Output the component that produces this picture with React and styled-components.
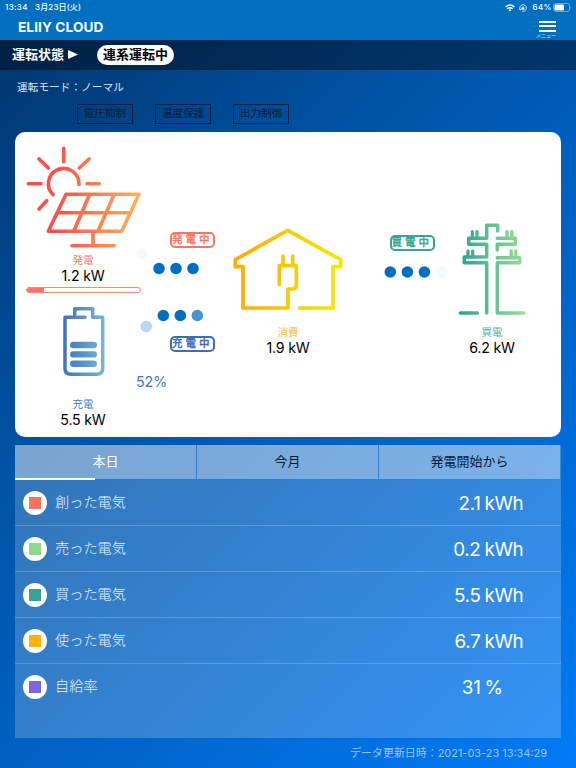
import React from "react";
import styled, { createGlobalStyle } from "styled-components";

const Global = createGlobalStyle`
  * { box-sizing: border-box; }
  body { margin: 0; }
  svg { display: block; flex: none; }
`;

const Page = styled.main`
  width: 576px;
  height: 768px;
  overflow: hidden;
  display: flex;
  flex-direction: column;
  color: #fff;
  font-family: Inter, "Noto Sans CJK JP", sans-serif;
  background: linear-gradient(135deg, #003368 0%, #0053a6 36%, #007bf7 100%);
  white-space: nowrap;
`;

const Header = styled.header`
  height: 40px;
  flex: none;
  background: #006fc0;
  border-bottom: 1px solid #1c64a0;
`;

const DeviceBar = styled.div`
  display: flex;
  align-items: center;
  height: 15px;
  padding: 0 4px 0 5px;
  font-size: 8px;
  line-height: 15px;
  font-weight: 500;
`;

const Clock = styled.span`
  width: 30px;
  letter-spacing: 0.35px;
`;

const DateText = styled.span`
  flex: 1;
  letter-spacing: 0.15px;
`;

const Indicators = styled.div`
  display: flex;
  align-items: center;
  letter-spacing: 0.45px;
`;

const Charge = styled.span`
  margin: 0 1px 0 4px;
`;

const TitleBar = styled.div`
  display: flex;
  justify-content: space-between;
  height: 24px;
  padding: 0 20px 0 18px;
`;

const Title = styled.h1`
  margin: 0;
  font-size: 13.6px;
  line-height: 24px;
  font-weight: 700;
  letter-spacing: 0.1px;
`;

const MenuButton = styled.div`
  display: flex;
  flex-direction: column;
  align-items: center;
  width: 20px;
  padding-top: 5.5px;
`;

const MenuLine = styled.i`
  width: 17px;
  height: 2px;
  margin: 0 0 2.5px 2px;
  flex: none;
  background: #fff;
`;

const MenuLabel = styled.span`
  font-size: 5px;
  line-height: 6px;
  margin: -2.5px 0 0 0;
  color: #cfe3f4;
`;

const StateBar = styled.section`
  display: flex;
  align-items: center;
  height: 30px;
  flex: none;
  padding: 0 12px;
  background: rgba(0, 0, 0, 0.4);
  font-size: 13px;
  line-height: 20px;
  font-weight: 700;
`;

const StateLabel = styled.span`
  margin: -2px 4px 0 0;
`;

const StatePill = styled.span`
  width: 77px;
  height: 20px;
  margin-left: 19px;
  border-radius: 10px;
  background: #fff;
  color: #000;
  text-align: center;
  line-height: 19px;
`;

const Mode = styled.p`
  margin: 9px 0 0 17px;
  height: 17px;
  flex: none;
  font-size: 10.7px;
  line-height: 17px;
  color: #dbe7f4;
`;

const Flags = styled.div`
  display: flex;
  flex: none;
  gap: 22px;
  padding: 8px 0 0 77px;
`;

const Flag = styled.span`
  width: 56px;
  height: 20px;
  border: 1px solid #001c3f;
  color: #001c3f;
  font-size: 10.6px;
  line-height: 18px;
  text-align: center;
`;

const Diagram = styled.section`
  display: grid;
  grid-template-columns: 136px 82px 110px 106px 86px;
  flex: none;
  width: 546px;
  height: 305px;
  margin: 8px 0 0 15px;
  border-radius: 10px;
  background: #fff;
`;

const Node = styled.div`
  display: flex;
  flex-direction: column;
  align-items: center;
  padding-top: ${(p) => p.$top}px;
`;

const NodeName = styled.span`
  height: 14px;
  margin-top: ${(p) => p.$gap}px;
  font-size: 10.5px;
  line-height: 16px;
  color: ${(p) => p.$color};
`;

const Power = styled.span`
  height: 18px;
  color: #000;
  font-size: 14.2px;
  line-height: 18px;
  letter-spacing: -0.2px;
`;

const Meter = styled.div`
  width: 115px;
  height: 6px;
  margin: 2px 0 11px 1px;
  overflow: hidden;
  border: 1px solid #fa8675;
  border-radius: 3px;
`;

const MeterFill = styled.div`
  width: 17px;
  height: 100%;
  background: #fa7562;
`;

const Link = styled.div`
  display: flex;
  flex-direction: column;
  align-items: flex-start;
  padding: ${(p) => p.$top}px 0 0 ${(p) => p.$left}px;
`;

const Tag = styled.span`
  width: 45px;
  height: 16px;
  margin-left: ${(p) => p.$indent}px;
  border: 2px solid ${(p) => p.$color};
  border-radius: 5px;
  color: ${(p) => p.$color};
  font-size: 10.5px;
  line-height: 12px;
  font-weight: 500;
  letter-spacing: 3px;
  -webkit-text-stroke: 0.3px currentColor;
`;

const Dots = styled.svg`
  overflow: visible;
  margin: ${(p) => p.$gap || "0"};
`;

const Percent = styled.span`
  margin: 21px 0 0 -15px;
  height: 18px;
  color: #4274bd;
  font-size: 14.2px;
  line-height: 18px;
`;

const Report = styled.section`
  width: 546px;
  height: 293px;
  flex: none;
  margin: 8px 0 0 15px;
  background: rgba(255, 255, 255, 0.2);
`;

const Tabs = styled.div`
  display: grid;
  grid-template-columns: repeat(3, 181px);
  column-gap: 1px;
  height: 35px;
`;

const Tab = styled.div`
  display: flex;
  flex-direction: column;
  height: 34px;
  background: rgba(255, 255, 255, 0.35);
  color: ${(p) => (p.$active ? "#fff" : "#071b33")};
  font-size: 13px;
  line-height: 33px;
  text-align: center;
`;

const TabMark = styled.i`
  width: 80px;
  height: 1.5px;
  flex: none;
  background: #fff;
`;

const Row = styled.div`
  display: grid;
  grid-template-columns: 24px 410px 1fr;
  align-items: center;
  height: 46px;
  padding: 0 0 0 8px;
  border-bottom: ${(p) => (p.$last ? "0" : "1px solid rgba(255, 255, 255, 0.2)")};
`;

const Badge = styled.span`
  display: grid;
  place-items: center;
  width: 24px;
  height: 24px;
  border-radius: 50%;
  background: #fff;
`;

const Swatch = styled.i`
  width: 12px;
  height: 12px;
  background: ${(p) => p.$color};
`;

const RowName = styled.span`
  padding-left: 8px;
  color: #eaf3fc;
  font-size: 14.2px;
  font-weight: 300;
  line-height: 20px;
  margin-top: -2px;
`;

const Reading = styled.span`
  display: grid;
  grid-template-columns: 25px 40px;
  column-gap: 4px;
  margin: 2px 0 0 -1.5px;
  font-size: 18.8px;
  line-height: 24px;
`;

const Amount = styled.span`
  justify-self: end;
  letter-spacing: -0.3px;
`;

const Unit = styled.span`
  letter-spacing: -0.4px;
`;

const Updated = styled.footer`
  align-self: flex-end;
  margin: 6px 29px 0 0;
  font-size: 10.95px;
  line-height: 18px;
  color: #9fc3ea;
`;

const Gradient = ({ id, x1, x2, from, to }) => (
  <defs>
    <linearGradient id={id} gradientUnits="userSpaceOnUse" x1={x1} y1="0" x2={x2} y2="0">
      <stop stopColor={from} />
      <stop offset="1" stopColor={to} />
    </linearGradient>
  </defs>
);

const line = { fill: "none", strokeLinecap: "round", strokeLinejoin: "round" };

const SolarIcon = () => (
  <svg width="116" height="104" viewBox="0 0 116 104">
    <Gradient id="solar" x1="30" x2="116" from="#ff4d4a" to="#ffb35a" />
    <g {...line} stroke="url(#solar)" strokeWidth="3.6">
      <path d="M38.7 3.3 38.71 16.7M14 14 23.3 23M64 14 54.3 23M3.3 38.7 16 38.71M62 38.7 74.3 38.71M14 64 21.7 55.7" />
      <path d="M54 39.5A15.3 15.3 0 1 0 28 49.7" />
      <path d="M41 49.3H114L96.7 86.3H23.3ZM32 67.7H105.3M64.7 49.3 48.7 86.3M89.3 49.3 73 86.3M68 86.3V100.7M47 100.7H89.3" />
    </g>
  </svg>
);

const BatteryIcon = () => (
  <svg width="47" height="74" viewBox="0 0 47 74">
    <Gradient id="battery" x1="3" x2="44" from="#3e72bf" to="#78b4d4" />
    <path {...line} stroke="url(#battery)" strokeWidth="3.5" d="M25 13.3H5V64.5Q5 70.3 11 70.3H36.7Q42.7 70.3 42.7 64.5V13.3H32.7V4.7H14.7V13.3" />
    <path {...line} stroke="url(#battery)" strokeWidth="6.4" d="M13.3 41H33.8M13.3 50.4H33.8M13.3 59.7H33.8" />
  </svg>
);

const HouseIcon = () => (
  <svg width="116" height="88" viewBox="0 0 116 88">
    <Gradient id="house" x1="4" x2="112" from="#ffaa08" to="#f5e900" />
    <path
      {...line}
      stroke="url(#house)"
      strokeWidth="3.7"
      d="M69.7 83H103V41.7H110.7V34.7L57.7 5.3 5.3 34.7V41.7H13V83H58V64H62.3Q66.3 64 66.3 60V40.7H49.3V59.3M53 31V40.7M62.7 31V40.7"
    />
  </svg>
);

const PylonIcon = () => (
  <svg width="74" height="97" viewBox="0 0 74 97">
    <Gradient id="pylon" x1="6" x2="68" from="#30a491" to="#95dd92" />
    <g {...line} stroke="url(#pylon)" strokeWidth="3.5">
      <path d="M5.3 93 22.3 93.01M31.7 93V42.7H9.3V37H31.7V24.3H13.7V18.3H31.7V5.3H42.7V11M42.3 18.3H60.3V24.3H42.3V30M42.3 37.7H64.7V42.7H42.3V93H68.7" />
      <path strokeWidth="3.2" d="M17.3 11.5V18M22 11.5V18M13 30.8V37M17.7 30.8V37M52 11.5V18M56.8 11.5V18M56.3 30.8V37M60.8 30.8V37" />
    </g>
  </svg>
);

const WifiIcon = () => (
  <svg width="10" height="8" viewBox="0 0 10 8" fill="none" stroke="#fff" strokeWidth="1.4">
    <path d="M.6 3Q5-.9 9.4 3M2.3 4.8Q5 2.5 7.7 4.8" />
    <path d="M3.6 5.9Q5 4.8 6.4 5.9L5 7.4Z" fill="#fff" stroke="none" />
  </svg>
);

const LockIcon = () => (
  <svg width="8" height="8" viewBox="0 0 8 8" fill="none" stroke="#fff" strokeWidth=".8">
    <path d="M1.2 5.6A3.3 3.3 0 1 1 3 7.1M.3 4.6 1.2 6 2.6 5.2" />
    <path d="M3.2 3.8V3.1Q4 2 4.8 3.1V3.8" strokeWidth=".6" />
    <path d="M2.6 3.6H5.4V5.6H2.6Z" fill="#fff" stroke="none" />
  </svg>
);

const BatteryLevel = () => (
  <svg width="19" height="9" viewBox="0 0 19 9">
    <rect x=".5" y=".5" width="16" height="8" rx="2.3" fill="none" stroke="#7fb7e0" strokeWidth=".8" />
    <rect x="1.5" y="1.6" width="9.5" height="5.8" rx="1.2" fill="#fff" />
    <path d="M17.5 3Q18.8 4.5 17.5 6Z" fill="#7fb7e0" />
  </svg>
);

const rows = [
  { name: "創った電気", color: "#fa735d", amount: "2.1", unit: "kWh" },
  { name: "売った電気", color: "#8fd98f", amount: "0.2", unit: "kWh" },
  { name: "買った電気", color: "#34a593", amount: "5.5", unit: "kWh" },
  { name: "使った電気", color: "#ffb000", amount: "6.7", unit: "kWh" },
  { name: "自給率", color: "#7d65dc", amount: "31", unit: "%" },
];

export default function App() {
  return (
    <Page>
      <Global />
      <Header>
        <DeviceBar>
          <Clock>13:34</Clock>
          <DateText>3月23日(火)</DateText>
          <Indicators>
            <WifiIcon />
            <Charge><LockIcon /></Charge>
            <Charge>64%</Charge>
            <BatteryLevel />
          </Indicators>
        </DeviceBar>
        <TitleBar>
          <Title>ELIIY CLOUD</Title>
          <MenuButton>
            <MenuLine />
            <MenuLine />
            <MenuLine />
            <MenuLabel>メニュー</MenuLabel>
          </MenuButton>
        </TitleBar>
      </Header>
      <StateBar>
        <StateLabel>運転状態</StateLabel>
        <svg width="10" height="10" viewBox="0 0 10 10">
          <path d="M0 0 10 4.5 0 9Z" fill="#fff" />
        </svg>
        <StatePill>連系運転中</StatePill>
      </StateBar>
      <Mode>運転モード：ノーマル</Mode>
      <Flags>
        <Flag>電圧抑制</Flag>
        <Flag>温度保護</Flag>
        <Flag>出力制御</Flag>
      </Flags>
      <Diagram>
        <Node $top={13}>
          <SolarIcon />
          <NodeName $gap={4} $color="#fa7b69">発電</NodeName>
          <Power>1.2 kW</Power>
          <Meter><MeterFill /></Meter>
          <BatteryIcon />
          <NodeName $gap={19} $color="#4a7cc4">充電</NodeName>
          <Power>5.5 kW</Power>
        </Node>
        <Link $top={100} $left={0}>
          <Tag $indent={19} $color="#fa7562">発電中</Tag>
          <Dots width="52" height="22" viewBox="151 248 52 22" fill="#006fc2">
            <circle cx="142" cy="253.5" r="5.5" fill="#f4f9fd" />
            <circle cx="159" cy="268.5" r="5.8" />
            <circle cx="176" cy="268.5" r="5.8" />
            <circle cx="193" cy="268.5" r="5.8" />
          </Dots>
          <Dots width="52" height="24" viewBox="151 308 52 24" $gap="38px 0 4px" fill="#006fc2">
            <circle cx="146.3" cy="326.5" r="5.8" fill="#b9d7ef" />
            <circle cx="163.3" cy="315.5" r="5.8" />
            <circle cx="180.3" cy="315.5" r="5.8" />
            <circle cx="197.3" cy="315.5" r="5.8" fill="#4593d1" />
          </Dots>
          <Tag $indent={19} $color="#3c6db5">充電中</Tag>
          <Percent>52%</Percent>
        </Link>
        <Node $top={93}>
          <HouseIcon />
          <NodeName $gap={12} $color="#ffb84a">消費</NodeName>
          <Power>1.9 kW</Power>
        </Node>
        <Link $top={103} $left={46.5}>
          <Tag $indent={0} $color="#34a593">買電中</Tag>
          <Dots width="60" height="14" viewBox="384 265 60 14" $gap="14px 0 0 -6px" fill="#006fc2">
            <circle cx="390.3" cy="272" r="5.8" />
            <circle cx="407.4" cy="272" r="5.8" />
            <circle cx="424.4" cy="272" r="5.8" />
            <circle cx="441.5" cy="272" r="5.8" fill="#f4f9fd" />
          </Dots>
        </Link>
        <Node $top={88}>
          <PylonIcon />
          <NodeName $gap={8} $color="#4fb09f">買電</NodeName>
          <Power>6.2 kW</Power>
        </Node>
      </Diagram>
      <Report>
        <Tabs>
          <Tab $active>本日<TabMark /></Tab>
          <Tab>今月</Tab>
          <Tab>発電開始から</Tab>
        </Tabs>
        {rows.map((row, i) => (
          <Row key={row.name} $last={i === rows.length - 1}>
            <Badge><Swatch $color={row.color} /></Badge>
            <RowName>{row.name}</RowName>
            <Reading>
              <Amount>{row.amount}</Amount>
              <Unit>{row.unit}</Unit>
            </Reading>
          </Row>
        ))}
      </Report>
      <Updated>データ更新日時：2021-03-23 13:34:29</Updated>
    </Page>
  );
}
